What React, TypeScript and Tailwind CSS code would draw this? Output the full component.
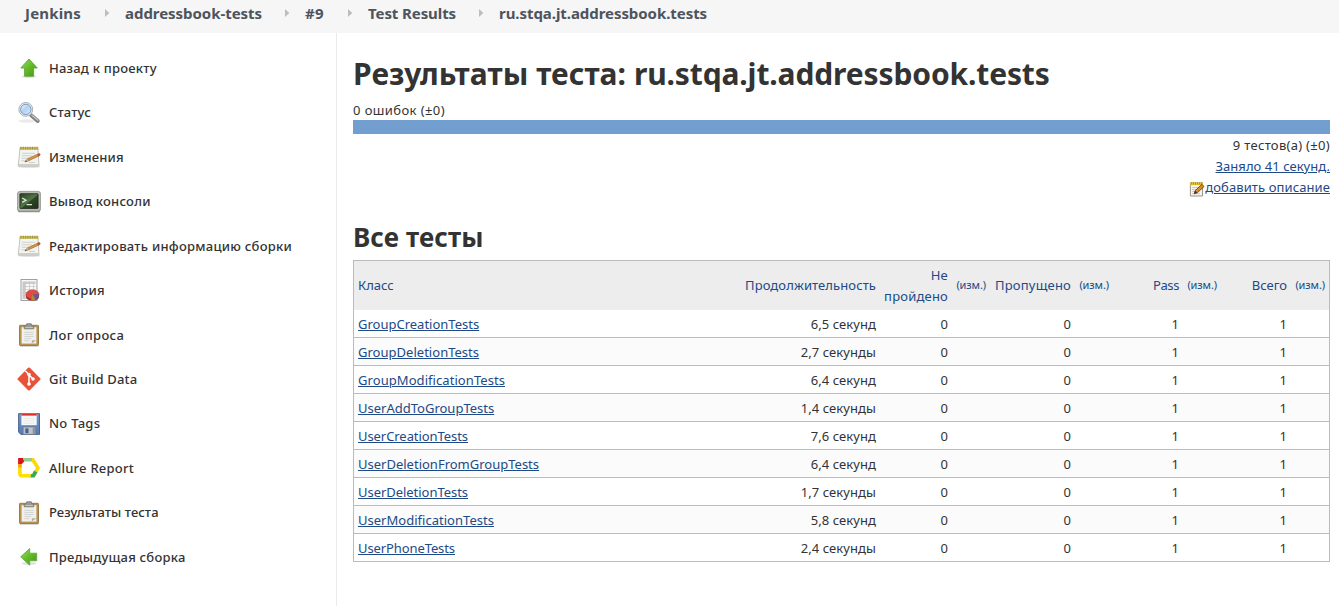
import type { ReactNode } from 'react';

function Svg({ children, size = 24 }: { children: ReactNode; size?: number }) {
  return (
    <svg width={size} height={size} viewBox="0 0 24 24" className="block shrink-0" aria-hidden="true">
      {children}
    </svg>
  );
}

function GreenArrow({ left = false }: { left?: boolean }) {
  const id = left ? 'arrowLeft' : 'arrowUp';
  return (
    <Svg>
      <defs>
        <linearGradient id={id} x1="0" y1="0" x2="1" y2="1">
          <stop offset="0" stopColor="#98e05c" />
          <stop offset="0.5" stopColor="#62bb28" />
          <stop offset="1" stopColor="#459612" />
        </linearGradient>
      </defs>
      <ellipse cx="12" cy={left ? 18.5 : 20.5} rx="7.5" ry="1.5" fill="#000" opacity="0.13" />
      {left ? (
        <path d="M3.7 11.8 12.7 3.6v4.6h7v7.6h-7v4.4z" fill={`url(#${id})`} stroke="#68a848" strokeWidth="0.9" strokeLinejoin="round" />
      ) : (
        <path d="M12 3 20.3 12h-3.7v8.2H7.6V12H3.8z" fill={`url(#${id})`} stroke="#5fa337" strokeWidth="0.9" strokeLinejoin="round" />
      )}
    </Svg>
  );
}

function Magnifier() {
  return (
    <Svg>
      <defs>
        <linearGradient id="lens" x1="0" y1="0" x2="1" y2="1">
          <stop offset="0" stopColor="#f4f9fd" />
          <stop offset="0.45" stopColor="#b3d1f0" />
          <stop offset="1" stopColor="#dcebf8" />
        </linearGradient>
      </defs>
      <ellipse cx="10" cy="20" rx="8.5" ry="1.8" fill="#000" opacity="0.08" />
      <path d="M14.2 14.2 20.8 20" stroke="#7c7e7c" strokeWidth="3.8" strokeLinecap="round" />
      <path d="m15 14.3 5.8 5" stroke="#c4c6c3" strokeWidth="1.5" strokeLinecap="round" />
      <circle cx="8.8" cy="8.4" r="6.9" fill="#eff0ee" stroke="#a2a5a9" strokeWidth="0.9" />
      <circle cx="8.8" cy="8.4" r="5.2" fill="url(#lens)" stroke="#6f97c4" strokeWidth="1" />
    </Svg>
  );
}

function Notepad() {
  return (
    <Svg>
      <ellipse cx="12" cy="21.7" rx="11" ry="1" fill="#000" opacity="0.15" />
      <path d="M3 4h18l1 17H1.2z" fill="#f3f3f0" stroke="#b5b4ae" strokeWidth="0.8" />
      <path d="M1.5 19h20.4l.2 2.3H1.2z" fill="#cfcfca" />
      <path d="M2.7 2h18.6l.3 2.8H2.4z" fill="#c9bb55" />
      <path d="M4 1.6v2.8M6.3 1.6v2.8M8.6 1.6v2.8M10.9 1.6v2.8M13.2 1.6v2.8M15.5 1.6v2.8M17.8 1.6v2.8M20 1.6v2.8" stroke="#998b3c" strokeWidth="0.8" />
      <path d="M5 8.3h13M4.8 10.8h10M4.6 13.3h7M4.4 15.8h4M12 17.5h6" stroke="#c6c6c3" strokeWidth="0.8" />
      <path d="M8 16.8 11 13.6l9.5-4.4 1 2-9.3 4.3z" fill="#d9963f" stroke="#936532" strokeWidth="0.6" />
      <path d="m8 16.8 3-3.2 1.2 1.9z" fill="#ecd8b0" stroke="#776044" strokeWidth="0.5" />
      <path d="m8 16.8 1.1-1.3.5.8z" fill="#333" />
      <path d="m20.5 9.2 1.3-.7c1.2-.2 1.8 1 1.1 1.9l-1.4.8z" fill="#c9573f" stroke="#8f4635" strokeWidth="0.5" />
    </Svg>
  );
}

function Terminal() {
  return (
    <Svg>
      <defs>
        <linearGradient id="screen" x1="0" y1="0" x2="1" y2="1">
          <stop offset="0" stopColor="#2a3f24" />
          <stop offset="0.5" stopColor="#527746" />
          <stop offset="0.55" stopColor="#2d4725" />
          <stop offset="1" stopColor="#1d3019" />
        </linearGradient>
      </defs>
      <path d="M1.5 12h21l1 8-1 2.2h-21L.5 20z" fill="#8f918d" />
      <rect x="0.4" y="1.4" width="23.2" height="19.6" rx="2.6" fill="#b9bbb6" stroke="#90928e" strokeWidth="0.8" />
      <rect x="2.9" y="3.7" width="18.2" height="14.8" rx="0.6" fill="url(#screen)" stroke="#1f2b1c" strokeWidth="0.8" />
      <path d="m5.2 8 3.8 2.2-3.8 2.2M9.6 14.6h5.4" fill="none" stroke="#dfe8d8" strokeWidth="1.3" />
    </Svg>
  );
}

function Report() {
  return (
    <Svg>
      <rect x="4" y="1.5" width="16" height="21" fill="#f8f8f7" stroke="#9fa1a1" strokeWidth="1" />
      <path d="M5.5 3.5h13v2h-13zM5.5 5.5H8v15H5.5z" fill="#c9cbc9" />
      <path d="M5.5 5.5h13M5.5 8.5h13M5.5 11.5h13M5.5 14.5h13M5.5 17.5h13M5.5 20.5h13M8.5 3.5v17M12.5 3.5v17M16.5 3.5v17" fill="none" stroke="#c4c4c4" strokeWidth="0.7" />
      <path d="M9 16.5v2.2c0 2.2 2.8 3.8 6.5 3.8s6.5-1.6 6.5-3.8v-2.2z" fill="#a52424" />
      <ellipse cx="15.5" cy="16.4" rx="6.5" ry="4.5" fill="#e34b42" stroke="#bd3632" strokeWidth="0.6" />
      <path d="m15.5 16.3 6.5-.4c.3 2.8-.8 4.6-3.4 5.6z" fill="#6c5790" />
      <path d="m15.5 16.3 3.1 5.2c-1.4.7-2.8.9-4.5.8z" fill="#b08c2a" />
    </Svg>
  );
}

function Clipboard() {
  return (
    <Svg>
      <path d="M3 23h18.5" stroke="#000" strokeWidth="1" opacity="0.3" />
      <rect x="2.5" y="2.3" width="19" height="20.2" rx="0.7" fill="#b8934f" stroke="#957440" strokeWidth="0.9" />
      <path d="M4.6 4.2h14.8v16.4H4.6z" fill="#f0f0ed" />
      <path d="M14.8 20.6v-3.4h4.6z" fill="#b0b1ab" />
      <path d="M7.3 9.3h9.3M7.3 11.4h9.3M7.3 13.5h9.3M7.3 15.6h7M7.3 17.7h5" stroke="#d3d3d0" strokeWidth="1" />
      <path d="M7.2 5.8V3.4l2-.8.5-1.8h4.6l.5 1.8 2 .8v2.4z" fill="#989b95" stroke="#73766f" strokeWidth="0.8" />
      <path d="M8.2 4.5h7.6" stroke="#cdcfca" strokeWidth="0.8" />
    </Svg>
  );
}

function Git() {
  return (
    <Svg>
      <rect x="3.5" y="3.5" width="17" height="17" rx="1.2" transform="rotate(45 12 12)" fill="#e8523a" />
      <path d="M8.2 3.7 12 7.5v9.6M12 8l4.3 4.3" fill="none" stroke="#fff" strokeWidth="1.5" />
      <circle cx="12" cy="7.6" r="1.8" fill="#fff" />
      <circle cx="16" cy="12" r="1.8" fill="#fff" />
      <circle cx="12" cy="17" r="1.8" fill="#fff" />
    </Svg>
  );
}

function Floppy() {
  return (
    <Svg>
      <defs>
        <linearGradient id="disk" x1="0" y1="0" x2="0" y2="1">
          <stop offset="0" stopColor="#7597c8" />
          <stop offset="1" stopColor="#557bb2" />
        </linearGradient>
      </defs>
      <path d="M1.6 1.6h20.9v20.8H4L1.6 20.2z" fill="url(#disk)" stroke="#4d6692" strokeWidth="1" strokeLinejoin="round" />
      <path d="M4.4 1.6h15.3v11.6H4.4z" fill="#f8f8f8" />
      <path d="M4.4 1.5h15.3v2.1H4.4z" fill="#db3028" />
      <path d="M6.3 6.6h11.4M6.3 8.9h11.4M6.3 11.2h11.4" stroke="#e2e2e2" strokeWidth="0.7" />
      <path d="M6.2 15h12.2v7.3H6.2z" fill="#c0c3c4" stroke="#697386" strokeWidth="0.6" />
      <path d="M8.3 16.4h3.2v4.8H8.3z" fill="#4a6286" />
      <path d="M15.7 15.4h2.4v6.5h-2.4z" fill="#8f949a" />
    </Svg>
  );
}

function Allure() {
  return (
    <Svg>
      <path d="M2.9 7.5V17" stroke="#fce000" strokeWidth="3.6" />
      <path d="M2.9 7.5v4" stroke="#efa51f" strokeWidth="3.6" />
      <path d="M1.1 2h5l1.2 3.4-2.6 2.6H1.1z" fill="#d8151c" />
      <path d="M6 2h10l-1.3 3.5H7.2z" fill="#97cc8c" />
      <path d="M15.3 2H17l6 10-2.7 4.7-3-2 1.6-2.7-4.2-6.5z" fill="#fbd908" />
      <path d="m17 14.4 3.5 2-3 5.2h-4.3l.5-3.5h1.5z" fill="#3ba84a" />
      <path d="M1.1 16.2h3.6V18h9.5l-1.1 3.6H4.7c-2.2 0-3.6-1.6-3.6-3.8z" fill="#fce000" />
    </Svg>
  );
}

function EditNote() {
  return (
    <svg width="16" height="16" viewBox="0 0 16 16" className="mt-0.5 block shrink-0" aria-hidden="true">
      <path d="M1.4 2h12.1v13H1.4z" fill="#f5f4ef" stroke="#8d8b83" strokeWidth="0.9" />
      <path d="M1 1.4h13v2.7H1z" fill="#e3c634" />
      <path d="M2.3 1v2.6M4.4 1v2.6M6.5 1v2.6M8.6 1v2.6M10.7 1v2.6M12.8 1v2.6" stroke="#a58912" strokeWidth="0.8" />
      <path d="M3 6.5h7M3 8.5h5M3 10.5h3M3 12.6h8" stroke="#c2c1bd" strokeWidth="0.8" />
      <path d="m5.2 12.8 1-3.2 6.7-6.3 2.1 2.2-6.6 6.2z" fill="#d98d32" stroke="#704312" strokeWidth="0.9" strokeLinejoin="round" />
      <path d="m5.2 12.8 1-3.2 2.2 2.1z" fill="#4a3620" />
    </svg>
  );
}

const menu: { label: string; icon: ReactNode; cls: string }[] = [
  { label: 'Назад к проекту', icon: <GreenArrow />, cls: 'tracking-[0.22px]' },
  { label: 'Статус', icon: <Magnifier />, cls: 'tracking-[0.15px]' },
  { label: 'Изменения', icon: <Notepad />, cls: 'tracking-[0.14px]' },
  { label: 'Вывод консоли', icon: <Terminal />, cls: 'tracking-[0.25px]' },
  { label: 'Редактировать информацию сборки', icon: <Notepad />, cls: 'tracking-[0.25px]' },
  { label: 'История', icon: <Report />, cls: 'tracking-[0.24px]' },
  { label: 'Лог опроса', icon: <Clipboard />, cls: 'tracking-[0.33px]' },
  { label: 'Git Build Data', icon: <Git />, cls: 'tracking-[0.18px]' },
  { label: 'No Tags', icon: <Floppy />, cls: 'tracking-[0.25px]' },
  { label: 'Allure Report', icon: <Allure />, cls: 'tracking-[0.23px]' },
  { label: 'Результаты теста', icon: <Clipboard />, cls: 'tracking-[0.06px]' },
  { label: 'Предыдущая сборка', icon: <GreenArrow left />, cls: 'tracking-[0.22px]' },
];

const crumbs: { label: string; cls: string }[] = [
  { label: 'Jenkins', cls: 'w-[80px] tracking-[0.18px]' },
  { label: 'addressbook-tests', cls: 'w-[160px] tracking-[-0.04px]' },
  { label: '#9', cls: 'w-[43px] tracking-[0.3px]' },
  { label: 'Test Results', cls: 'w-[111px] tracking-[-0.09px]' },
  { label: 'ru.stqa.jt.addressbook.tests', cls: 'tracking-[-0.06px]' },
];

const rows: { name: string; time: string; cls: string }[] = [
  { name: 'GroupCreationTests', time: '6,5 секунд', cls: '' },
  { name: 'GroupDeletionTests', time: '2,7 секунды', cls: 'tracking-[0.02px]' },
  { name: 'GroupModificationTests', time: '6,4 секунд', cls: 'tracking-[0.065px]' },
  { name: 'UserAddToGroupTests', time: '1,4 секунды', cls: '' },
  { name: 'UserCreationTests', time: '7,6 секунд', cls: 'tracking-[-0.065px]' },
  { name: 'UserDeletionFromGroupTests', time: '6,4 секунд', cls: '' },
  { name: 'UserDeletionTests', time: '1,7 секунды', cls: 'tracking-[-0.04px]' },
  { name: 'UserModificationTests', time: '5,8 секунд', cls: 'tracking-[0.02px]' },
  { name: 'UserPhoneTests', time: '2,4 секунды', cls: 'tracking-[-0.1px]' },
];

const link = 'text-[#204a87] underline underline-offset-1';
const num = 'px-1 text-right';
const diff = 'whitespace-nowrap px-1 pb-0.5 text-right text-[11px] tracking-[-0.1px]';

export default function App() {
  return (
    <div className="flex h-[606px] w-[1339px] flex-col overflow-hidden bg-white font-['Noto_Sans','Open_Sans',sans-serif] text-[13px] text-[#333]">
      <nav className="flex h-[33px] shrink-0 items-start bg-[#f6f6f6] pl-[25px] text-[15px] font-bold leading-[27px] text-[#4d545d]">
        {crumbs.map((c, i) => (
          <div key={c.label} className="flex">
            <span className={`whitespace-nowrap ${c.cls}`}>{c.label}</span>
            {i < crumbs.length - 1 && (
              <svg width="20" height="27" viewBox="0 0 20 27" aria-hidden="true">
                <path d="M0 8.9 4.3 13 0 17.1z" fill="#bdbdbd" />
              </svg>
            )}
          </div>
        ))}
      </nav>

      <div className="flex min-h-0 flex-1">
        <aside className="flex w-[337px] shrink-0 flex-col border-r border-[#eaeaea] pl-[17px] pt-[13px]">
          {menu.map((m) => (
            <a key={m.label} className="flex h-[44.45px] shrink-0 items-center gap-2 font-medium">
              {m.icon}
              <span className={`whitespace-nowrap pt-px ${m.cls}`}>{m.label}</span>
            </a>
          ))}
        </aside>

        <main className="w-[993px] shrink-0 pl-4">
          <h1 className="pt-[20px] text-[30px] font-bold leading-[41px] tracking-[0.05px]">
            Результаты теста: <span className="tracking-[-0.13px]">ru.stqa.jt.addressbook.tests</span>
          </h1>
          <div className="h-[26px] pt-[6px] leading-[21px] tracking-[0.41px]">0 ошибок (±0)</div>
          <div className="h-[14px] bg-[#729fcf]" />
          <div className="flex flex-col items-end pt-px leading-[21px]">
            <div className="tracking-[0.3px]">9 тестов(а) (±0)</div>
            <a className={`tracking-[0.04px] ${link}`}>Заняло 41 секунд.</a>
            <div className="flex items-center">
              <EditNote />
              <a className={`tracking-[0.1px] ${link}`}>добавить описание</a>
            </div>
          </div>

          <h2 className="pb-px pt-[17px] text-[26px] font-bold leading-[44px] tracking-[0.1px]">Все тесты</h2>

          <table className="w-[977px] table-fixed border-separate border-spacing-0 border border-b-0 border-[#bbb] leading-[21px]">
            <colgroup>
              <col className="w-[386px]" />
              <col className="w-[140px]" />
              <col className="w-[72px]" />
              <col className="w-[38px]" />
              <col className="w-[85px]" />
              <col className="w-[38px]" />
              <col className="w-[70px]" />
              <col className="w-[38px]" />
              <col className="w-[70px]" />
              <col className="w-[38px]" />
            </colgroup>
            <thead>
              <tr className="h-[49px] bg-[#ededed] text-[#204a87]">
                <td className="px-1">Класс</td>
                <td className={`${num} tracking-[0.1px]`}>Продолжительность</td>
                <td className={`${num} tracking-[0.2px]`}>Не пройдено</td>
                <td className={diff}>(изм.)</td>
                <td className={`${num} tracking-[0.2px]`}>Пропущено</td>
                <td className={diff}>(изм.)</td>
                <td className={`${num} tracking-[-0.4px]`}>Pass</td>
                <td className={diff}>(изм.)</td>
                <td className={num}>Всего</td>
                <td className={diff}>(изм.)</td>
              </tr>
            </thead>
            <tbody>
              {rows.map((r) => (
                <tr key={r.name} className="h-[28px] even:bg-[#fbfbfb] [&>td]:border-b [&>td]:border-[#bbb] [&>td]:pt-0.5">
                  <td className="px-1">
                    <a className={`${link} ${r.cls}`}>{r.name}</a>
                  </td>
                  <td className={`${num} tracking-[0.08px]`}>{r.time}</td>
                  <td className={num}>0</td>
                  <td />
                  <td className={num}>0</td>
                  <td />
                  <td className={num}>1</td>
                  <td />
                  <td className={num}>1</td>
                  <td />
                </tr>
              ))}
            </tbody>
          </table>
        </main>
      </div>
    </div>
  );
}
